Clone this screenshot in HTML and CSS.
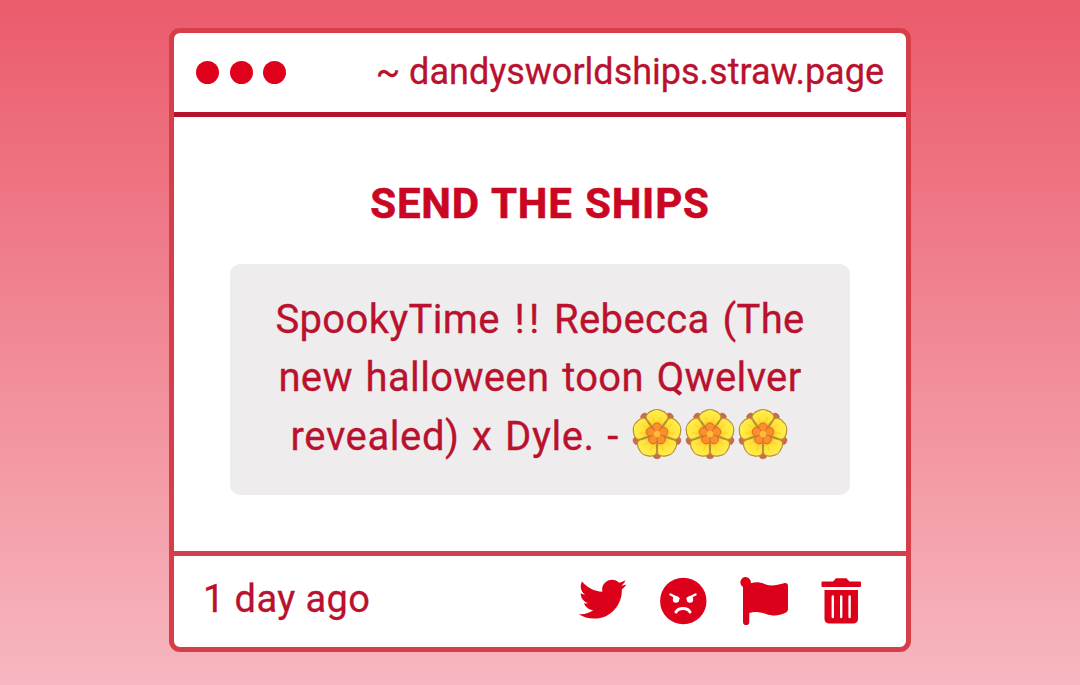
FILE: index.html
```html
<!DOCTYPE html>
<html lang="en">
<head>
  <meta charset="UTF-8">
  <title>dandysworldships.straw.page</title>
  <link rel="stylesheet" href="styles.css">
</head>
<body>

  <!-- one flower, reused in the message -->
  <svg class="defs" width="0" height="0">
    <defs>
      <radialGradient id="petalFill" gradientUnits="userSpaceOnUse" cx="0" cy="0" r="25">
        <stop offset="0.3" stop-color="#f7b01d"/>
        <stop offset="0.55" stop-color="#ffe135"/>
        <stop offset="1" stop-color="#fff050"/>
      </radialGradient>
      <g id="petal">
        <path d="M0 -2C-3 -5 -6 -9 -8.500 -12.500C-12.500 -16 -11 -19 -9 -20.500C-7.500 -22.800 -5.500 -22.600 -4 -23.600C-2 -24.600 2 -24.600 4 -23.600C5.500 -22.600 7.500 -22.800 9 -20.500C11 -19 12.500 -16 8.500 -12.500C6 -9 3 -5 0 -2Z" fill="url(#petalFill)" stroke="#b98f3c" stroke-width="1.200"/>
        <path d="M-3 -12L-4.500 -17M3 -12L4.500 -17" fill="none" stroke="#f3d12e" stroke-width="0.900"/>
      </g>
      <symbol id="flower" viewBox="-26 -26 52 52">
        <circle r="19.500" fill="#c5622a"/>
        <g fill="#cf6a48" stroke="#a9623e" stroke-width="0.600">
          <circle cx="0" cy="21" r="3.800"/>
          <circle cx="0" cy="21" r="3.800" transform="rotate(72)"/>
          <circle cx="0" cy="21" r="3.800" transform="rotate(144)"/>
          <circle cx="0" cy="21" r="3.800" transform="rotate(216)"/>
          <circle cx="0" cy="21" r="3.800" transform="rotate(288)"/>
        </g>
        <use href="#petal"/>
        <use href="#petal" transform="rotate(72)"/>
        <use href="#petal" transform="rotate(144)"/>
        <use href="#petal" transform="rotate(216)"/>
        <use href="#petal" transform="rotate(288)"/>
        <g fill="#fb8f2e" stroke="#d9681c" stroke-width="0.900">
          <circle cx="0" cy="-6.800" r="4.300"/>
          <circle cx="0" cy="-6.800" r="4.300" transform="rotate(72)"/>
          <circle cx="0" cy="-6.800" r="4.300" transform="rotate(144)"/>
          <circle cx="0" cy="-6.800" r="4.300" transform="rotate(216)"/>
          <circle cx="0" cy="-6.800" r="4.300" transform="rotate(288)"/>
        </g>
        <circle r="3.600" fill="#fdbd3c" stroke="#ee8a26" stroke-width="0.600"/>
      </symbol>
    </defs>
  </svg>

  <div class="window">
    <div class="window-top">
      <div class="dots">
        <span class="dot"></span>
        <span class="dot"></span>
        <span class="dot"></span>
      </div>
      <div class="url">~ dandysworldships.straw.page</div>
    </div>

    <div class="content">
      <h1>SEND THE SHIPS</h1>
      <div class="message">
        SpookyTime <span class="marks">!!</span> Rebecca (The<br>
        new halloween toon Qwelver<br>
        <span class="last-line">revealed) x Dyle. - </span><span class="flowers"><svg class="flower"><use href="#flower"/></svg><svg class="flower"><use href="#flower"/></svg><svg class="flower"><use href="#flower"/></svg></span>
      </div>
    </div>

    <div class="window-bottom">
      <div class="time">1 day ago</div>
      <div class="actions">
        <svg class="icon" viewBox="-8 20 512 512">
          <path d="M459.370 151.716c.325 4.548.325 9.097.325 13.645 0 138.720-105.583 298.558-298.558 298.558-59.452 0-114.680-17.219-161.137-47.106 8.447.974 16.568 1.299 25.340 1.299 49.055 0 94.213-16.568 130.274-44.832-46.132-.975-84.792-31.188-98.112-72.772 6.498.974 12.995 1.624 19.818 1.624 9.421 0 18.843-1.300 27.614-3.573-48.081-9.747-84.143-51.980-84.143-102.985v-1.299c13.969 7.797 30.214 12.670 47.431 13.319-28.264-18.843-46.781-51.005-46.781-87.391 0-19.492 5.197-37.360 14.294-52.954 51.655 63.675 129.300 105.258 216.365 109.807-1.624-7.797-2.599-15.918-2.599-24.040 0-57.828 46.782-104.934 104.934-104.934 30.213 0 57.502 12.670 76.670 33.137 23.715-4.548 46.456-13.320 66.599-25.340-7.798 24.366-24.366 44.833-46.132 57.827 21.117-2.273 41.584-8.122 60.426-16.243-14.292 20.791-32.161 39.308-52.628 54.253z"/>
        </svg>
        <svg class="icon" viewBox="0 0 48 48">
          <circle cx="24.300" cy="24" r="23.200"/>
          <g class="face">
            <path d="M11.500 17.500L19.500 21.500M36.500 17.500L28.500 21.500"/>
            <path d="M17 35C19.500 30.300 28.500 30.300 31 35" stroke-width="3"/>
          </g>
          <circle cx="17" cy="22.500" r="3.200" fill="#fff"/>
          <circle cx="31" cy="22.500" r="3.200" fill="#fff"/>
        </svg>
        <svg class="icon" viewBox="0 0 48 48">
          <path d="M5.500 0A5.400 5.400 0 0 1 10.800 6.200C17 4.500 21 5.500 26 7.500C32 9.800 38 7.500 44 6.200C46.500 5.600 48 6.800 48 8.800V32C48 34 47 35 45.500 35.800C38 39.500 32 39 26 37C20 35 15 34 9.300 36V45A3 3 0 0 1 3 45V10A5.400 5.400 0 0 1 5.500 0Z"/>
        </svg>
        <svg class="icon trash" viewBox="0 0 48 48">
          <path d="M5.500 4.500H16L18 2.400C18.500 1.600 19 1.300 20 1.300H28.500C29.500 1.300 30 1.600 30.500 2.400L32.500 4.500H43Q44 4.500 44 5.500V9Q44 10 43 10H5.500Q4.500 10 4.500 9V5.500Q4.500 4.500 5.500 4.500Z"/>
          <path d="M7.500 13H41V41.500Q41 46.500 36 46.500H12.500Q7.500 46.500 7.500 41.500Z"/>
          <path class="bars" d="M15.800 19.500V40M24.200 19.500V40M32.600 19.500V40"/>
        </svg>
      </div>
    </div>
  </div>

</body>
</html>
```
FILE: styles.css
```css
* {
  box-sizing: border-box;
}
body {
  margin: 0;
  height: 685px;
  padding-top: 28px;
  overflow: hidden;
  font-family: Roboto, "Liberation Sans", sans-serif;
  color: #b9112e;
  background: linear-gradient(#eb5b6c, #f7b7c0);
}
.defs {
  display: block;
}
.window {
  display: flex;
  flex-direction: column;
  width: 742px;
  height: 624px;
  margin: 0 auto;
  background-color: white;
  border: 5px solid #d63e49;
  border-radius: 11px;
}
.window-top {
  display: flex;
  align-items: center;
  justify-content: space-between;
  height: 84px;
  padding: 0 22px;
  border-bottom: 5px solid #b5132d;
}
.dots {
  display: flex;
  gap: 10.700px;
}
.dot {
  width: 23px;
  height: 23px;
  border-radius: 50%;
  background-color: #df001b;
}
.url {
  padding-bottom: 2px;
  font-size: 36px;
}
.content {
  flex: 1;
  padding: 60px 56px 0;
}
h1 {
  margin: 0 0 34px;
  font-size: 42px;
  line-height: 53px;
  letter-spacing: 0.8px;
  word-spacing: 1px;
  text-align: center;
  color: #ca0723;
  -webkit-text-stroke: 0.6px #ca0723;
}
.message {
  height: 231px;
  padding-top: 27px;
  font-size: 40px;
  line-height: 58.400px;
  letter-spacing: 0.350px;
  word-spacing: 2.500px;
  text-align: center;
  white-space: nowrap;
  background-color: #eeecec;
  border-radius: 10px;
}
.marks {
  margin-right: -2px;
  padding-left: 2px;
  letter-spacing: 4px;
}
.last-line {
  letter-spacing: 0.6px;
  word-spacing: 2px;
}
.url,
.message,
.time {
  -webkit-text-stroke: 0.3px #b9112e;
}
.flowers {
  display: inline-flex;
  gap: 1px;
  height: 52px;
  vertical-align: top;
}
.flower {
  width: 52px;
  height: 52px;
}
.window-bottom {
  display: flex;
  align-items: center;
  justify-content: space-between;
  height: 96px;
  padding: 0 41px 2px 29px;
  border-top: 5px solid #d33f4b;
}
.time {
  padding-bottom: 3px;
  font-size: 38px;
  letter-spacing: 0.400px;
}
.actions {
  display: flex;
  gap: 33px;
}
.icon {
  width: 48px;
  height: 48px;
  fill: #dd001b;
}
.trash {
  margin-left: -4px;
}
.face,
.bars {
  fill: none;
  stroke: white;
  stroke-width: 2.400;
  stroke-linecap: round;
}
```
